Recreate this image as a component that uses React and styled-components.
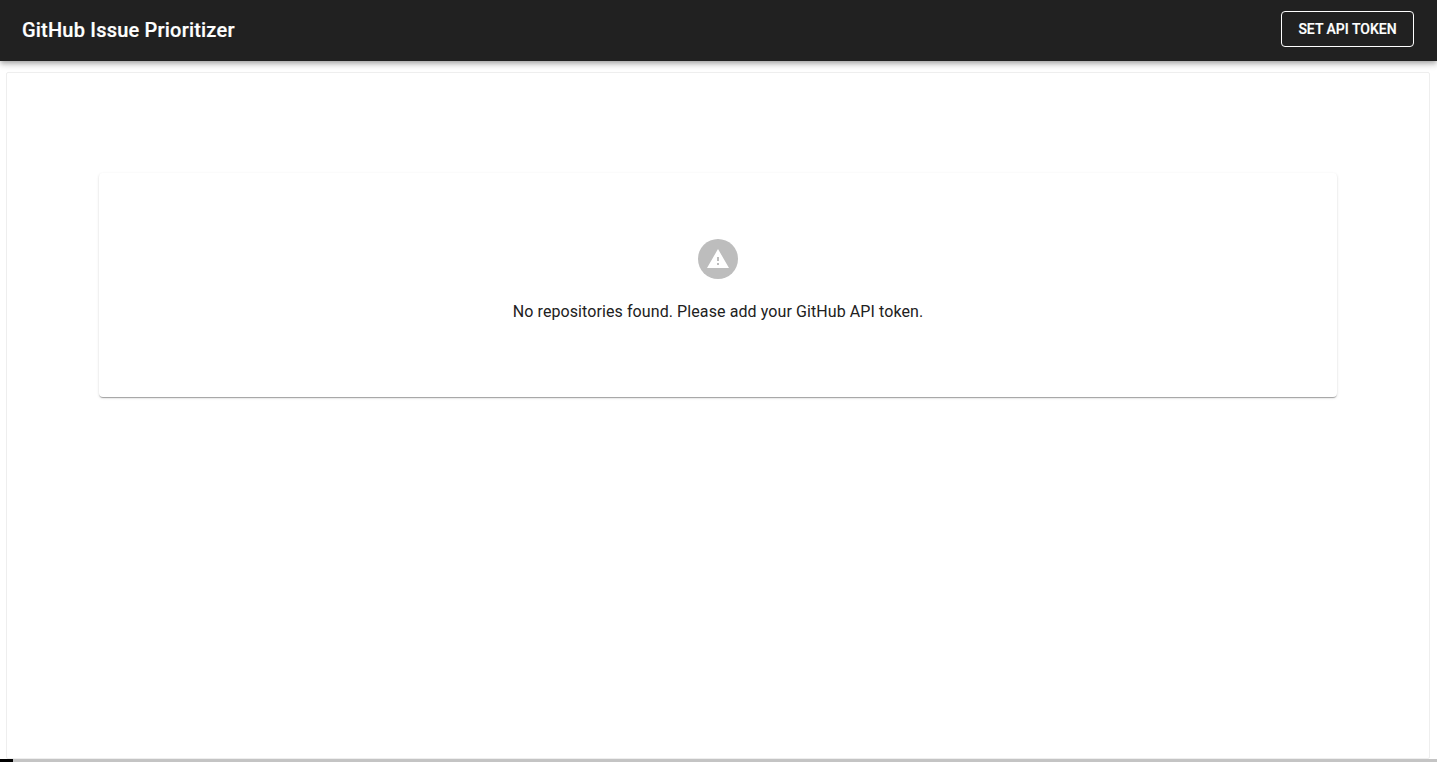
import styled, { createGlobalStyle } from "styled-components";

const GlobalStyle = createGlobalStyle`
  html, body {
    margin: 0;
    padding: 0;
    height: 100%;
    background: #fff;
    overflow: hidden;
  }
  body {
    font-family: Roboto, "Liberation Sans", sans-serif;
  }
`;

const Page = styled.div`
  height: 762px;
  display: flex;
  flex-direction: column;
`;

const Header = styled.header`
  height: 61px;
  flex: none;
  display: flex;
  align-items: center;
  justify-content: space-between;
  padding: 0 23px 3px 22px;
  box-sizing: border-box;
  background: #212121;
  color: #fff;
  box-shadow: 0 2px 4px -1px rgba(0, 0, 0, 0.2), 0 4px 5px rgba(0, 0, 0, 0.14), 0 1px 10px rgba(0, 0, 0, 0.12);
  position: relative;
  z-index: 2;
`;

const Title = styled.h1`
  margin: 2px 0 0;
  font-size: 20px;
  font-weight: 500;
  line-height: 32px;
  letter-spacing: 0.2px;
  -webkit-text-stroke: 0.2px #fff;
`;

const TokenButton = styled.button`
  width: 133px;
  height: 36px;
  padding: 0 0 1px;
  border: 1px solid #fff;
  border-radius: 4px;
  background: transparent;
  color: #fff;
  font-family: inherit;
  font-size: 14px;
  font-weight: 500;
  letter-spacing: 0;
  text-transform: uppercase;
  -webkit-text-stroke: 0.2px #fff;
`;

const Main = styled.main`
  flex: 1;
  min-height: 0;
  display: flex;
  padding: 11px 7px 0 6px;
`;

const Panel = styled.section`
  flex: 1;
  box-sizing: border-box;
  padding: 100px 92px 0;
  border: 1px solid #eeeeee;
  border-radius: 2px;
  background: #fff;
`;

const EmptyCard = styled.div`
  height: 224px;
  box-sizing: border-box;
  padding-top: 66px;
  display: flex;
  flex-direction: column;
  align-items: center;
  border-radius: 4px;
  background: #fff;
  box-shadow: 0 2px 1px -1px rgba(0, 0, 0, 0.2), 0 1px 1px rgba(0, 0, 0, 0.14), 0 1px 3px rgba(0, 0, 0, 0.12);
`;

const IconCircle = styled.div`
  width: 40px;
  height: 40px;
  border-radius: 50%;
  background: #bdbdbd;
  display: flex;
  align-items: center;
  justify-content: center;
  svg {
    width: 24px;
    height: 24px;
    fill: #fff;
  }
`;

const Message = styled.p`
  margin: 21px 0 0;
  font-size: 16px;
  line-height: 24px;
  letter-spacing: 0.09px;
  color: #212121;
`;

const BottomEdge = styled.div`
  height: 3px;
  flex: none;
  background: #c4c4c4;
  display: flex;
`;

const EdgeMark = styled.div`
  width: 13px;
  background: #000;
`;

export default function App() {
  return (
    <Page>
      <GlobalStyle />
      <Header>
        <Title>GitHub Issue Prioritizer</Title>
        <TokenButton>Set API Token</TokenButton>
      </Header>
      <Main>
        <Panel>
          <EmptyCard>
            <IconCircle>
              <svg viewBox="0 0 24 24">
                <path d="M1 21h22L12 2 1 21zm12-3h-2v-2h2v2zm0-4h-2v-4h2v4z" />
              </svg>
            </IconCircle>
            <Message>No repositories found. Please add your GitHub API token.</Message>
          </EmptyCard>
        </Panel>
      </Main>
      <BottomEdge>
        <EdgeMark />
      </BottomEdge>
    </Page>
  );
}
